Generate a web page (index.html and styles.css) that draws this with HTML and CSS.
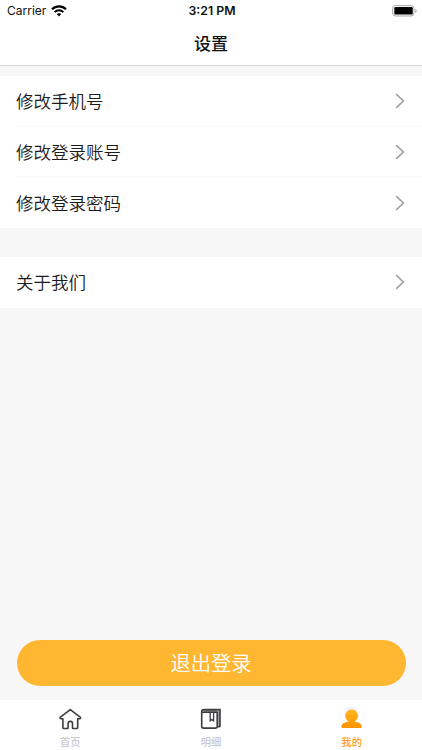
FILE: index.html
```html
<!DOCTYPE html>
<html lang="zh-CN">
<head>
  <meta charset="UTF-8">
  <meta name="viewport" content="width=device-width, initial-scale=1.0">
  <title>设置</title>
  <link rel="stylesheet" href="styles.css">
</head>
<body>
  <header class="header">
    <div class="status">
      <div class="carrier">
        <span>Carrier</span>
        <svg class="wifi" width="16" height="12" viewBox="0 0 16 12">
          <path d="M1 4.3C5 .4 11 .4 15 4.3" fill="none" stroke="#000" stroke-width="2.2"/>
          <path d="M3.6 7.1c2.5-2.4 6.3-2.4 8.8 0" fill="none" stroke="#000" stroke-width="1.9"/>
          <path d="M5.7 9.1c1.3-1.2 3.3-1.2 4.6 0L8 11.5z"/>
        </svg>
      </div>
      <div class="time">3:21 PM</div>
      <div class="battery">
        <svg width="26" height="12" viewBox="0 0 26 12">
          <rect x="1.6" y=".6" width="21.4" height="10.4" rx="3" fill="#fff" stroke="#a6a6a6"/>
          <rect x="3.3" y="2" width="18.4" height="7.6" rx="1.2"/>
          <path d="M24.4 4v4c1.6-.6 1.6-3.4 0-4z" fill="#999"/>
        </svg>
      </div>
    </div>
    <h1>设置</h1>
  </header>

  <main class="content">
    <div class="group">
      <a class="row"><span>修改手机号</span><svg class="arrow" viewBox="0 0 10 16"><path d="M1.2 1.2L8.3 8l-7.1 6.8"/></svg></a>
      <a class="row"><span>修改登录账号</span><svg class="arrow" viewBox="0 0 10 16"><path d="M1.2 1.2L8.3 8l-7.1 6.8"/></svg></a>
      <a class="row"><span>修改登录密码</span><svg class="arrow" viewBox="0 0 10 16"><path d="M1.2 1.2L8.3 8l-7.1 6.8"/></svg></a>
    </div>
    <div class="group">
      <a class="row"><span>关于我们</span><svg class="arrow" viewBox="0 0 10 16"><path d="M1.2 1.2L8.3 8l-7.1 6.8"/></svg></a>
    </div>
    <button class="logout"><span>退出登录</span></button>
  </main>

  <nav class="tabs">
    <a class="tab">
      <svg width="24" height="24" viewBox="0 0 24 24" fill="none" stroke="#3d3d3f" stroke-width="1.6" stroke-linejoin="round" stroke-linecap="round">
        <path d="M12.3 2.6L2.1 10.4q-.4 1.3 1 1.3h1.8v8.7q0 1.1 1.1 1.1h3.3q.8 0 .8-.8v-4.2c0-2.9 4.4-2.9 4.4 0v4.2q0 .8.8.8h3.3q1.1 0 1.1-1.1v-8.7h1.8q1.4 0 1-1.3z"/>
      </svg>
      <span>首页</span>
    </a>
    <a class="tab">
      <svg width="24" height="24" viewBox="0 0 24 24" fill="none" stroke="#3d3d3f" stroke-width="1.6">
        <path d="M4.5 3.9h14" stroke="#858587" stroke-width="2"/>
        <path d="M20 3.2v16" stroke="#858587" stroke-width="1.5"/>
        <path d="M2.7 5.2h15.5v14q0 1.9-1.9 1.9H4.6q-1.9 0-1.9-1.9V4.7q0-2.1 2.2-2.1H21v16.6q0 .6-.9.6h-1.9"/>
        <path d="M11.2 5.2v8.6l1.7-1.2 1.7 1.2V5.2" stroke-width="1.3"/>
      </svg>
      <span>明细</span>
    </a>
    <a class="tab active">
      <svg width="24" height="24" viewBox="0 0 24 24">
        <defs>
          <linearGradient id="gold" gradientUnits="userSpaceOnUse" x1="0" y1="2" x2="0" y2="21">
            <stop offset="0" stop-color="#ffb91f"/>
            <stop offset="1" stop-color="#ff9200"/>
          </linearGradient>
          <radialGradient id="halo">
            <stop offset="0" stop-color="#999" stop-opacity=".3"/>
            <stop offset="1" stop-color="#999" stop-opacity="0"/>
          </radialGradient>
        </defs>
        <circle cx="11.5" cy="6" r="9" fill="url(#halo)"/>
        <g fill="url(#gold)">
          <circle cx="11.6" cy="8.9" r="6.3"/>
          <path d="M8.8 13h5.6v1.6c4.4.5 7.5 2.5 7.5 5 0 .9-.3 1.3-1.2 1.3H2.6c-.9 0-1.2-.4-1.2-1.3 0-2.5 3-4.5 7.4-5z"/>
        </g>
      </svg>
      <span>我的</span>
    </a>
  </nav>
</body>
</html>
```

FILE: styles.css
```css
* {
  box-sizing: border-box;
}

body {
  margin: 0;
  height: 100vh;
  display: flex;
  flex-direction: column;
  overflow: hidden;
  background: #f7f7f7;
  color: #1c1c1c;
  font-family: Inter, "Noto Sans CJK SC", sans-serif;
}

.header {
  height: 66px;
  background: #fff;
  border-bottom: 1px solid #d9d9d9;
}

.status {
  display: grid;
  grid-template-columns: 1fr auto 1fr;
  align-items: center;
  height: 21px;
  padding: 0 5px 0 7px;
  color: #111;
  font-size: 12px;
}

.carrier {
  display: flex;
  align-items: center;
  gap: 5px;
}

.time {
  font-size: 12.3px;
  font-weight: 600;
}

.battery {
  display: flex;
  justify-content: flex-end;
}

h1 {
  margin: 0;
  color: #111;
  font-size: 17px;
  font-weight: 500;
  line-height: 46px;
  text-align: center;
}

.content {
  flex: 1;
  display: flex;
  flex-direction: column;
  padding-top: 10px;
}

.group {
  margin-bottom: 29px;
  background: #fff;
}

.row {
  display: flex;
  align-items: center;
  justify-content: space-between;
  height: 50.7px;
  margin-left: 16px;
  padding-right: 17px;
  border-bottom: 1px solid #f8f8f8;
  font-size: 17.5px;
  font-weight: 350;
}

.row span {
  padding-bottom: 1px;
}

.row:last-child {
  border-bottom: 0;
}

.arrow {
  width: 10px;
  height: 16px;
  fill: none;
  stroke: #a3a3a3;
  stroke-width: 1.7;
}

.logout {
  height: 46px;
  margin: auto 16.5px 14px;
  padding: 0 0 2px;
  border: 0;
  border-radius: 23px;
  background: #ffb630;
  color: #fff;
  font-family: inherit;
  font-size: 20.3px;
  font-weight: 350;
}

.tabs {
  display: grid;
  grid-template-columns: repeat(3, 1fr);
  height: 50px;
  background: #fff;
}

.tab {
  display: flex;
  flex-direction: column;
  align-items: center;
  padding-top: 7px;
  color: #c9c9d3;
  font-size: 10.3px;
  font-weight: 500;
  line-height: 22px;
}

.tab svg {
  flex: none;
}

.active {
  color: #ff9d1c;
}
```
